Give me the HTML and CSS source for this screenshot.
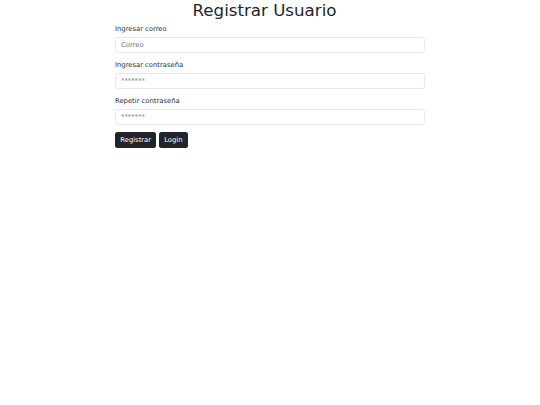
FILE: index.html
```html
<!DOCTYPE html>
<html lang="es">
<head>
<meta charset="utf-8">
<link rel="stylesheet" href="styles.css">
</head>
<body>
<div class="container">
  <h1 class="title">Registrar Usuario</h1>
  <form class="form">
    <div class="group">
      <label class="label">Ingresar correo</label>
      <input class="input" type="text" placeholder="Correo">
    </div>
    <div class="group">
      <label class="label">Ingresar contraseña</label>
      <input class="input" type="password" placeholder="*******">
    </div>
    <div class="group">
      <label class="label">Repetir contraseña</label>
      <input class="input" type="password" placeholder="*******">
    </div>
    <div class="actions">
      <button class="btn" type="button">Registrar</button>
      <button class="btn" type="button">Login</button>
    </div>
  </form>
</div>
</body>
</html>
```
FILE: styles.css
```css
html, body {
  margin: 0;
  padding: 0;
  background: #fff;
  font-family: "DejaVu Sans", sans-serif;
  color: #212529;
}
.container {
  width: 310px;
  margin: 0 auto;
}
.title {
  margin: 0 0 3.33px 0;
  padding-top: 0.5px;
  padding-right: 11px;
  font-size: 16.67px;
  font-weight: 400;
  line-height: 20px;
  text-align: center;
}
.form {
  display: flex;
  flex-direction: column;
  margin-top: 0.7px;
}
.group {
  display: flex;
  flex-direction: column;
  margin-bottom: 6.67px;
}
.label {
  font-size: 6.8px;
  line-height: 10px;
  margin-bottom: 3.33px;
  color: #2b3035;
}
.input {
  box-sizing: border-box;
  height: 16px;
  width: 100%;
  margin: 0;
  padding: 0 5px;
  border: 1px solid #e6e8eb;
  border-radius: 2.5px;
  font-family: "DejaVu Sans", sans-serif;
  font-size: 6.8px;
  line-height: 10px;
  color: #212529;
  background: #fff;
  outline: none;
}
.input::placeholder {
  color: #6c757d;
}
.actions {
  display: flex;
  gap: 2.5px;
  margin-top: 0.5px;
}
.btn {
  box-sizing: border-box;
  height: 16px;
  padding: 0 5.3px;
  border: none;
  border-radius: 2.5px;
  background: #212529;
  color: #fff;
  font-family: "DejaVu Sans", sans-serif;
  font-size: 6.8px;
  line-height: 16px;
}
```
